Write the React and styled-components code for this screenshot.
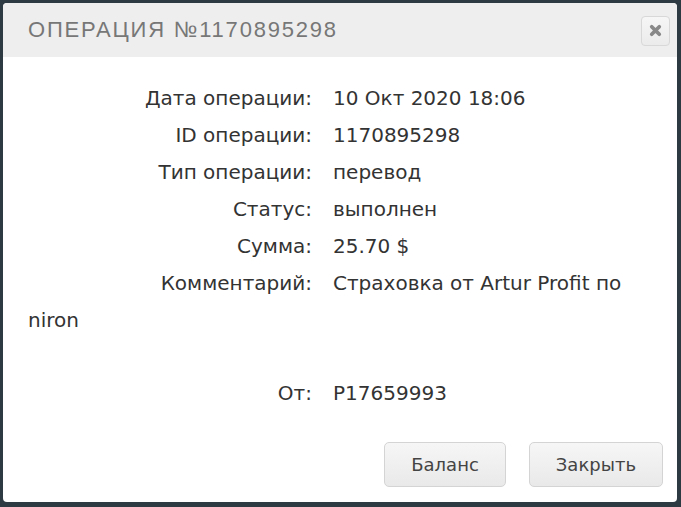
import React from 'react';
import styled, { createGlobalStyle } from 'styled-components';

const GlobalStyle = createGlobalStyle`
  html, body {
    margin: 0;
    padding: 0;
    background: #2e3a42;
  }
  body {
    width: 681px;
    height: 507px;
    overflow: hidden;
  }
`;

const Backdrop = styled.div`
  width: 681px;
  height: 507px;
  padding: 3px 4px 5px 3px;
  box-sizing: border-box;
`;

const Dialog = styled.div`
  height: 100%;
  display: flex;
  flex-direction: column;
  background: #fff;
  border-radius: 4px;
  overflow: hidden;
`;

const Header = styled.div`
  height: 54px;
  display: flex;
  align-items: center;
  justify-content: space-between;
  padding: 0 7px 0 25px;
  background: #eeeeee;
`;

const Title = styled.h1`
  margin: 0;
  font-family: 'Liberation Sans', sans-serif;
  font-weight: normal;
  font-size: 22px;
  letter-spacing: 1.8px;
  color: #777;
`;

const CloseButton = styled.button`
  width: 29px;
  height: 30px;
  margin-top: 1px;
  padding: 0;
  display: flex;
  align-items: center;
  justify-content: center;
  border: 1px solid #d8d8d8;
  border-radius: 4px;
  background: linear-gradient(#f6f6f6, #ebebeb);
  cursor: pointer;
`;

const Body = styled.div`
  flex: 1;
  padding: 23px 25px 0;
  font-family: 'DejaVu Sans', sans-serif;
  font-size: 20px;
  color: #333;
`;

const Row = styled.div`
  line-height: 37px;
  margin-top: ${({ gap }) => gap || 0}px;
`;

const Label = styled.span`
  display: inline-block;
  width: 284px;
  padding-right: 21px;
  text-align: right;
`;

const Footer = styled.div`
  display: flex;
  justify-content: flex-end;
  gap: 23px;
  padding: 0 14px 15px;
`;

const Button = styled.button`
  height: 45px;
  padding: 0 26px;
  font-family: 'DejaVu Sans', sans-serif;
  font-size: 18px;
  color: #444;
  border: 1px solid #d4d4d4;
  border-radius: 5px;
  background: linear-gradient(#f6f6f6, #e9e9e9);
  cursor: pointer;
`;

const rows = [
  ['Дата операции:', '10 Окт 2020 18:06'],
  ['ID операции:', '1170895298'],
  ['Тип операции:', 'перевод'],
  ['Статус:', 'выполнен'],
  ['Сумма:', '25.70 $'],
  ['Комментарий:', 'Страховка от Artur Profit по niron'],
];

const App = () => (
  <>
    <GlobalStyle />
    <Backdrop>
      <Dialog>
        <Header>
          <Title>ОПЕРАЦИЯ №1170895298</Title>
          <CloseButton aria-label="close">
            <svg width="13" height="13" viewBox="0 0 12 12">
              <path d="M2.5 2.5 L9.5 9.5 M9.5 2.5 L2.5 9.5" stroke="#888" strokeWidth="3.4" strokeLinecap="round" />
            </svg>
          </CloseButton>
        </Header>
        <Body>
          {rows.map(([label, value]) => (
            <Row key={label}>
              <Label>{label}</Label>
              {value}
            </Row>
          ))}
          <Row gap={36}>
            <Label>От:</Label>
            P17659993
          </Row>
        </Body>
        <Footer>
          <Button>Баланс</Button>
          <Button>Закрыть</Button>
        </Footer>
      </Dialog>
    </Backdrop>
  </>
);

export default App;
